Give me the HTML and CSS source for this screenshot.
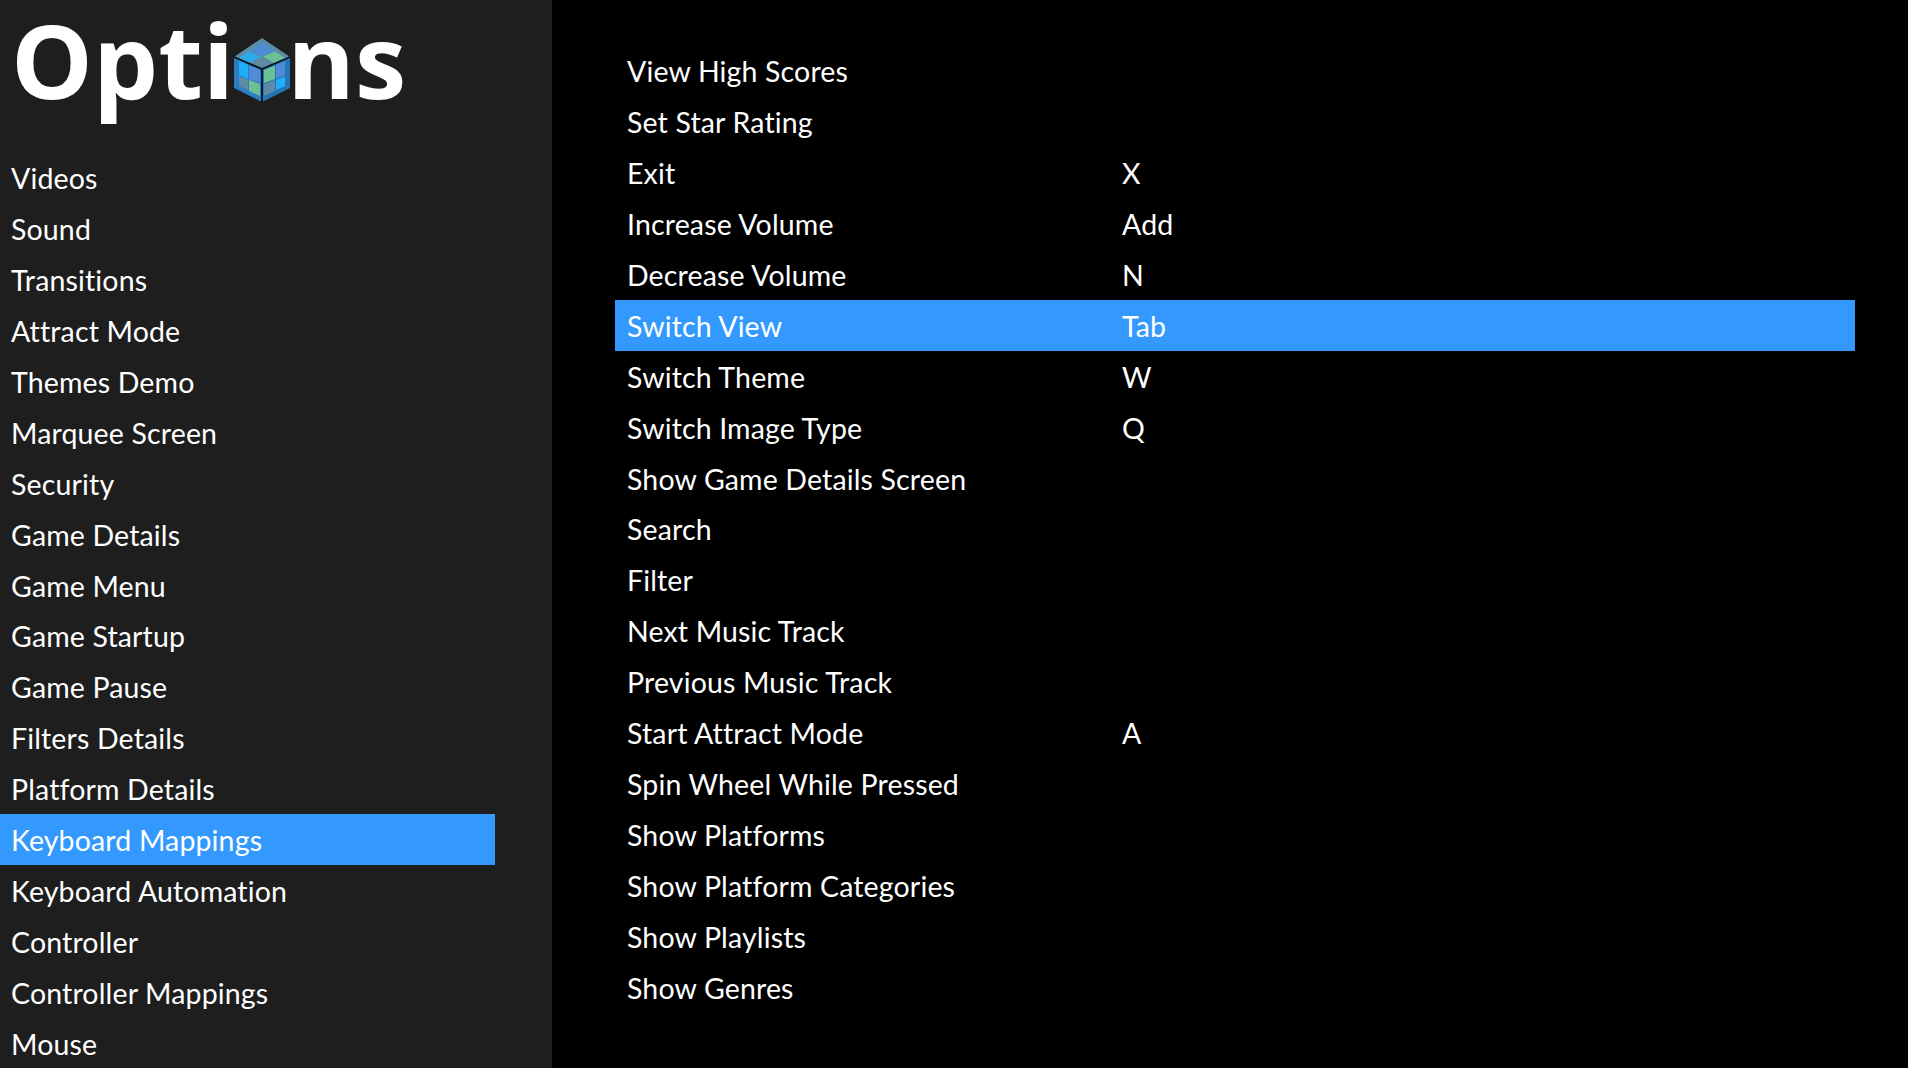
FILE: index.html
```html
<!DOCTYPE html>
<html lang="en">
<head>
<meta charset="utf-8">
<title>Options</title>
<link rel="stylesheet" href="styles.css">
</head>
<body>
<aside class="sidebar">
  <h1 class="title"><span class="word">Opti</span><svg class="cube" viewBox="0 0 56 64" aria-hidden="true">
    <polygon class="f-top" points="28,0 56,19 28,31 0,19"/>
    <polygon class="f-side" points="0,19 28,31 28,64 0,50"/>
    <polygon class="f-side2" points="56,19 28,31 28,64 56,50"/>
    <g class="tiles">
      <polygon class="c-blue" points="28,5 40,13 28,18 16,13"/>
      <polygon class="c-green" points="41,13.5 51,20 40,25 29,18.5"/>
      <polygon class="c-sky" points="15,13.5 27,18.5 16,25 5,20"/>
      <polygon class="c-gray" points="28,19 39,25.5 28,30 17,25.5"/>
      <polygon class="c-sky2" points="5,23 14,27 14,41 5,37"/>
      <polygon class="c-blue" points="15,27.5 26,32 26,45 15,41"/>
      <polygon class="c-gray" points="5,38 14,42 14,52 5,48"/>
      <polygon class="c-green" points="15,42 26,46 26,58 15,53"/>
      <polygon class="c-green" points="30,32 41,27.5 41,41 30,45"/>
      <polygon class="c-blue" points="42,27 51,23 51,37 42,41"/>
      <polygon class="c-gray" points="30,46 41,42 41,53 30,58"/>
      <polygon class="c-sky2" points="42,42 51,38 51,48 42,52"/>
    </g>
    <path class="edges" d="M0 19 28 31 56 19M28 31V64"/>
  </svg><span class="word">ns</span></h1>
  <nav class="nav">
    <div class="row">Videos</div>
    <div class="row">Sound</div>
    <div class="row">Transitions</div>
    <div class="row">Attract Mode</div>
    <div class="row">Themes Demo</div>
    <div class="row">Marquee Screen</div>
    <div class="row">Security</div>
    <div class="row">Game Details</div>
    <div class="row">Game Menu</div>
    <div class="row">Game Startup</div>
    <div class="row">Game Pause</div>
    <div class="row">Filters Details</div>
    <div class="row">Platform Details</div>
    <div class="row active">Keyboard Mappings</div>
    <div class="row">Keyboard Automation</div>
    <div class="row">Controller</div>
    <div class="row">Controller Mappings</div>
    <div class="row">Mouse</div>
  </nav>
</aside>
<main class="content">
  <div class="map"><span class="action">View High Scores</span><span></span></div>
  <div class="map"><span class="action">Set Star Rating</span><span></span></div>
  <div class="map"><span class="action">Exit</span><span>X</span></div>
  <div class="map"><span class="action">Increase Volume</span><span>Add</span></div>
  <div class="map"><span class="action">Decrease Volume</span><span>N</span></div>
  <div class="map active"><span class="action">Switch View</span><span>Tab</span></div>
  <div class="map"><span class="action">Switch Theme</span><span>W</span></div>
  <div class="map"><span class="action">Switch Image Type</span><span>Q</span></div>
  <div class="map"><span class="action">Show Game Details Screen</span><span></span></div>
  <div class="map"><span class="action">Search</span><span></span></div>
  <div class="map"><span class="action">Filter</span><span></span></div>
  <div class="map"><span class="action">Next Music Track</span><span></span></div>
  <div class="map"><span class="action">Previous Music Track</span><span></span></div>
  <div class="map"><span class="action">Start Attract Mode</span><span>A</span></div>
  <div class="map"><span class="action">Spin Wheel While Pressed</span><span></span></div>
  <div class="map"><span class="action">Show Platforms</span><span></span></div>
  <div class="map"><span class="action">Show Platform Categories</span><span></span></div>
  <div class="map"><span class="action">Show Playlists</span><span></span></div>
  <div class="map"><span class="action">Show Genres</span><span></span></div>
</main>
</body>
</html>
```
FILE: styles.css
```css
* { box-sizing: border-box; }
html, body { height: 100%; }
body {
  margin: 0;
  display: flex;
  height: 1068px;
  overflow: hidden;
  background: #000;
  color: #fff;
  font-family: Lato, "Liberation Sans", sans-serif;
  font-size: 28.5px;
  letter-spacing: 0.15px;
}
.sidebar {
  flex: 0 0 552px;
  background: #1e1e1e;
  overflow: hidden;
}
.title {
  margin: 0;
  height: 152px;
  padding: 0 0 0 11px;
  display: flex;
  align-items: flex-start;
  font-family: "Open Sans", sans-serif;
  font-weight: 700;
  font-size: 103px;
  line-height: 119px;
  letter-spacing: 0;
}
.cube {
  flex: none;
  width: 56px;
  height: 64px;
  margin: 38px -3px 0 0;
  overflow: visible;
}
.f-top { fill: #5b8ea6; }
.f-side { fill: #2b7fc0; }
.f-side2 { fill: #2477b4; }
.c-blue { fill: #4f8bd6; }
.c-green { fill: #6cc095; }
.c-sky { fill: #2ea9ec; }
.c-sky2 { fill: #20aef8; }
.c-gray { fill: #5f8aa4; }
.edges { fill: none; stroke: #06101c; stroke-width: 1.8; }
.nav { display: flex; flex-direction: column; width: 495px; }
.row {
  flex: none;
  height: 50.95px;
  line-height: 52px;
  padding-left: 11px;
  white-space: nowrap;
}
.active { background: #3399ff; }
.content {
  flex: none;
  width: 1240px;
  margin-left: 63px;
  padding-top: 45px;
  display: flex;
  flex-direction: column;
}
.map {
  flex: none;
  height: 50.95px;
  line-height: 52px;
  padding-left: 12px;
  display: grid;
  grid-template-columns: 495px 1fr;
  white-space: nowrap;
}
```
